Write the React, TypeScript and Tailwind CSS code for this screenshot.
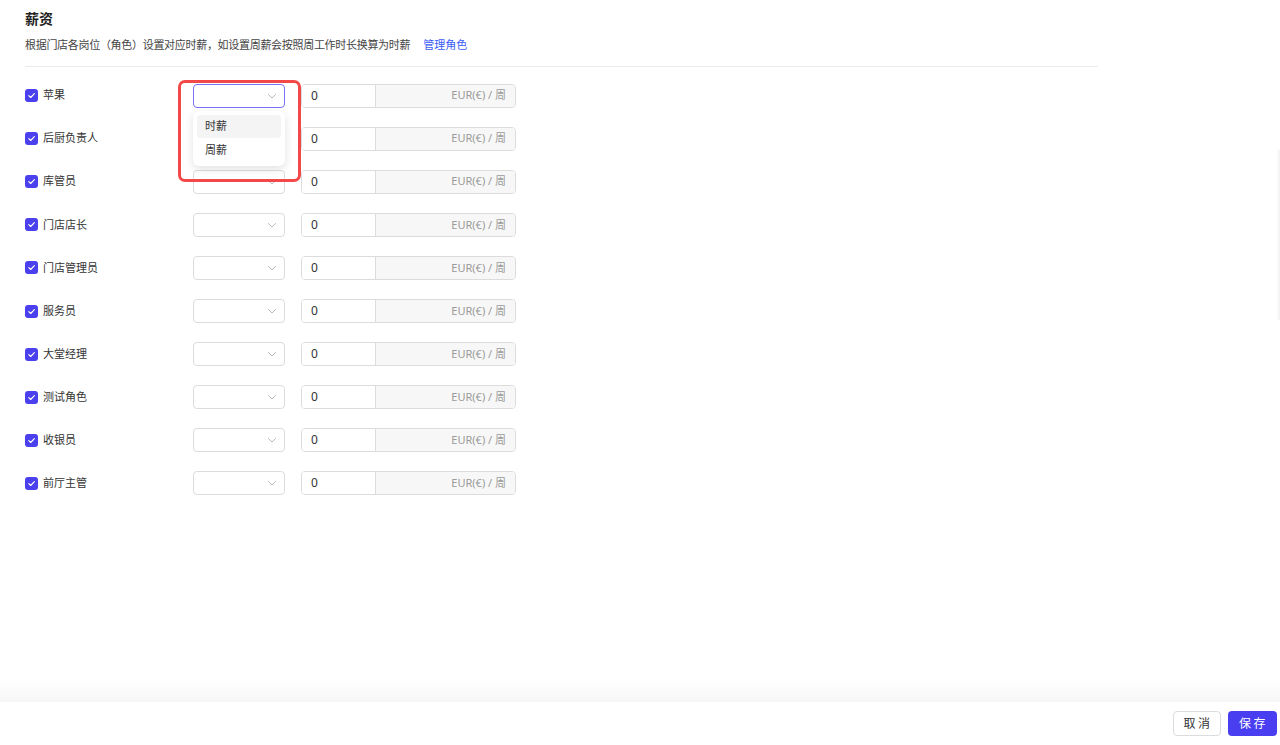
const roles = ['苹果', '后厨负责人', '库管员', '门店店长', '门店管理员', '服务员', '大堂经理', '测试角色', '收银员', '前厅主管'];

function Check() {
  return (
    <span className="w-[13px] h-[13px] rounded-[3px] bg-[#4b40ee] flex items-center justify-center shrink-0">
      <svg width="9" height="9" viewBox="0 0 10 10" fill="none">
        <path d="M2 5.2L4.1 7.2L8.2 2.9" stroke="white" strokeWidth="1.3" strokeLinecap="round" strokeLinejoin="round" />
      </svg>
    </span>
  );
}

function Chevron() {
  return (
    <svg width="10" height="10" viewBox="0 0 10 10" fill="none">
      <path d="M1.5 3.5L5 7L8.5 3.5" stroke="#b8b8b8" strokeWidth="1" strokeLinecap="round" strokeLinejoin="round" />
    </svg>
  );
}

export default function App() {
  return (
    <div
      className="relative w-[1280px] h-[745px] bg-white flex flex-col overflow-hidden text-[#333]"
      style={{ fontFamily: '"Noto Sans", "Noto Sans CJK SC", sans-serif' }}
    >
      {/* Content */}
      <div className="flex-1 px-[25px] pt-[9px]">
        <h2 className="text-[14px] font-bold leading-[20px] text-[#222]">薪资</h2>
        <p className="mt-[7px] text-[11px] leading-[18px] text-[#444] tracking-[-0.3px]">
          根据门店各岗位（角色）设置对应时薪，如设置周薪会按照周工作时长换算为时薪
          <a className="ml-[13px] text-[#3a5cf5] tracking-normal">管理角色</a>
        </p>
        <div className="mt-[12px] w-[1073px] h-px bg-[#ebebeb]" />

        <div className="mt-[7px] flex flex-col">
          {roles.map((r, i) => (
            <div key={r} className="h-[43.1px] flex items-center">
              <div className="w-[168px] flex items-center gap-[5px]">
                <Check />
                <span className="text-[11px]">{r}</span>
              </div>
              <div
                className={
                  'w-[92px] h-[24px] rounded-[4px] border bg-white flex items-center justify-end pr-[7px] ' +
                  (i === 0 ? 'border-[#7a72f5]' : 'border-[#dcdcdc]')
                }
              >
                <Chevron />
              </div>
              <div className="ml-[16px] w-[215px] h-[24px] rounded-[4px] border border-[#dcdcdc] flex overflow-hidden">
                <div className="w-[73px] flex items-center pl-[9px] text-[12px] text-[#333] bg-white">0</div>
                <div className="flex-1 border-l border-[#dcdcdc] bg-[#f7f7f7] flex items-center justify-end pr-[9px] text-[11px] text-[#9a9a9a]">
                  EUR(€) / 周
                </div>
              </div>
            </div>
          ))}
        </div>
      </div>

      {/* Dropdown */}
      <div className="absolute left-[193px] top-[111px] w-[92px] rounded-[6px] bg-white shadow-[0_3px_10px_rgba(0,0,0,0.12)] p-[4px] flex flex-col">
        <div className="h-[23px] rounded-[4px] bg-[#f4f4f4] flex items-center pl-[8px] text-[11px]">时薪</div>
        <div className="h-[24px] flex items-center pl-[8px] text-[11px]">周薪</div>
      </div>

      {/* Highlight */}
      <div className="absolute left-[178px] top-[80px] w-[123px] h-[102px] border-[3px] border-[#f24848] rounded-[7px]" />

      {/* Right edge shade */}
      <div className="absolute right-0 top-[150px] w-[4px] h-[170px] bg-gradient-to-r from-transparent to-[#f2f2f2]" />

      {/* Footer */}
      <div className="h-[24px] bg-gradient-to-b from-white to-[#f7f7f7]" />
      <div className="h-[43px] bg-white flex items-center justify-end gap-[7px] pr-[3px]">
        <button className="w-[48px] h-[25px] rounded-[4px] border border-[#dcdcdc] bg-white text-[12px] tracking-[0.2em] pl-[2px] text-[#333]">
          取消
        </button>
        <button className="w-[49px] h-[25px] rounded-[4px] bg-[#4a3ff0] text-[12px] tracking-[0.2em] pl-[2px] text-white">
          保存
        </button>
      </div>
    </div>
  );
}
